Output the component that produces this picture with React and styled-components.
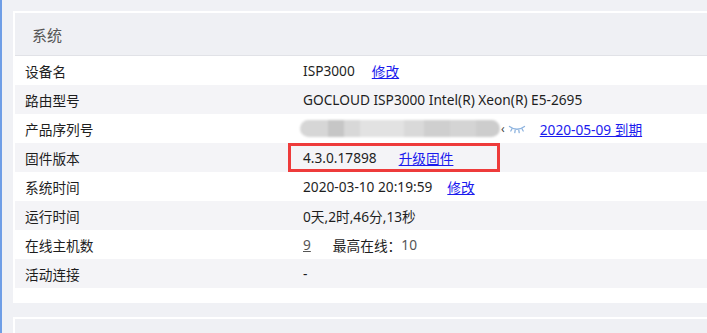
import React from "react";
import styled, { createGlobalStyle } from "styled-components";

const Global = createGlobalStyle`
  html, body { margin: 0; padding: 0; background: #f0f1f5; }
  body { font-family: "Noto Sans", "Noto Sans CJK SC", sans-serif; }
  #root { min-height: 333px; }
`;

const Page = styled.div`
  height: 333px;
  box-sizing: border-box;
  border-left: 2px solid #6f9ee6;
  padding: 11px 0 0 11px;
  overflow: hidden;
`;

const Card = styled.section`
  background: #fff;
  padding: 2px 0 ${(p) => p.$bottom ?? 15}px 2px;
  margin-bottom: 14px;
`;

const Header = styled.div`
  height: 42px;
  background: #eff0f4;
  border-bottom: 1px solid #e1e2e7;
  display: flex;
  align-items: center;
  padding-left: 17px;
  font-size: 15px;
  color: #555;
  font-family: "Noto Sans CJK SC", sans-serif;
`;

const Row = styled.div`
  height: 29px;
  display: grid;
  grid-template-columns: 288px 1fr;
  align-items: center;
  background: ${(p) => (p.$alt ? "#f4f4f7" : "#fff")};
  font-size: 13.7px;
  color: #1e1e1e;
`;

const Label = styled.div`
  padding-left: 10px;
  font-family: "Noto Sans CJK SC", sans-serif;
`;

const Value = styled.div`
  position: relative;
  display: flex;
  align-items: center;
  height: 100%;
  white-space: nowrap;
`;

const Link = styled.a`
  color: #1a1aee;
  text-decoration: underline;
  cursor: pointer;
  margin-left: ${(p) => p.$gap}px;
`;

const Muted = styled.span`
  color: #555;
  text-decoration: ${(p) => (p.$u ? "underline" : "none")};
  margin-left: ${(p) => p.$gap || 0}px;
`;

const Plain = styled.span`
  margin-left: ${(p) => p.$gap || 0}px;
`;

const Blur = styled.span`
  display: inline-block;
  width: 200px;
  height: 17px;
  margin-left: -3px;
  border-radius: 9px;
  background: linear-gradient(
    90deg,
    #d6d6d6 0 28px,
    #c6c6c6 28px 44px,
    #d8d8d8 44px 60px,
    #e2e2e2 60px 104px,
    #d9d9d9 104px 124px,
    #cfcfcf 124px 150px,
    #d4d4d4 150px 176px,
    #cdcdcd 176px 200px
  );
  filter: blur(1.2px);
`;

const Partial = styled.span`
  font-size: 12px;
  color: #444;
  margin-left: 1px;
`;

const Eye = styled.svg`
  margin-left: 3px;
  width: 18px;
  height: 10px;
`;

const Mark = styled.div`
  position: absolute;
  left: -15px;
  top: 0;
  width: 212px;
  height: 29px;
  box-sizing: border-box;
  border: 3px solid #ee3b3b;
  pointer-events: none;
`;

const EmptyHeader = styled.div`
  height: 40px;
  background: #eff0f4;
`;

export default function App() {
  return (
    <>
      <Global />
      <Page>
        <Card>
          <Header>系统</Header>
          <Row>
            <Label>设备名</Label>
            <Value>
              ISP3000<Link $gap={17}>修改</Link>
            </Value>
          </Row>
          <Row $alt>
            <Label>路由型号</Label>
            <Value>GOCLOUD ISP3000 Intel(R) Xeon(R) E5-2695</Value>
          </Row>
          <Row>
            <Label>产品序列号</Label>
            <Value>
              <Blur />
              <Partial>‹</Partial>
              <Eye viewBox="0 0 18 10" fill="none" stroke="#8db3df" strokeWidth="1.3" strokeLinecap="round">
                <path d="M1.5 2.5 Q9 8 16.5 2.5" />
                <path d="M4 4.8 L2.8 7" />
                <path d="M7.2 6.2 L6.8 8.6" />
                <path d="M10.8 6.2 L11.2 8.6" />
                <path d="M14 4.8 L15.2 7" />
              </Eye>
              <Link $gap={14}>2020-05-09 到期</Link>
            </Value>
          </Row>
          <Row $alt>
            <Label>固件版本</Label>
            <Value>
              4.3.0.17898<Link $gap={22}>升级固件</Link>
              <Mark />
            </Value>
          </Row>
          <Row>
            <Label>系统时间</Label>
            <Value>
              2020-03-10 20:19:59<Link $gap={15}>修改</Link>
            </Value>
          </Row>
          <Row $alt>
            <Label>运行时间</Label>
            <Value>0天,2时,46分,13秒</Value>
          </Row>
          <Row>
            <Label>在线主机数</Label>
            <Value>
              <Muted $u>9</Muted>
              <Plain $gap={22}>最高在线：</Plain>
              <Muted>10</Muted>
            </Value>
          </Row>
          <Row $alt>
            <Label>活动连接</Label>
            <Value>-</Value>
          </Row>
        </Card>
        <Card $bottom={0}>
          <EmptyHeader />
        </Card>
      </Page>
    </>
  );
}
